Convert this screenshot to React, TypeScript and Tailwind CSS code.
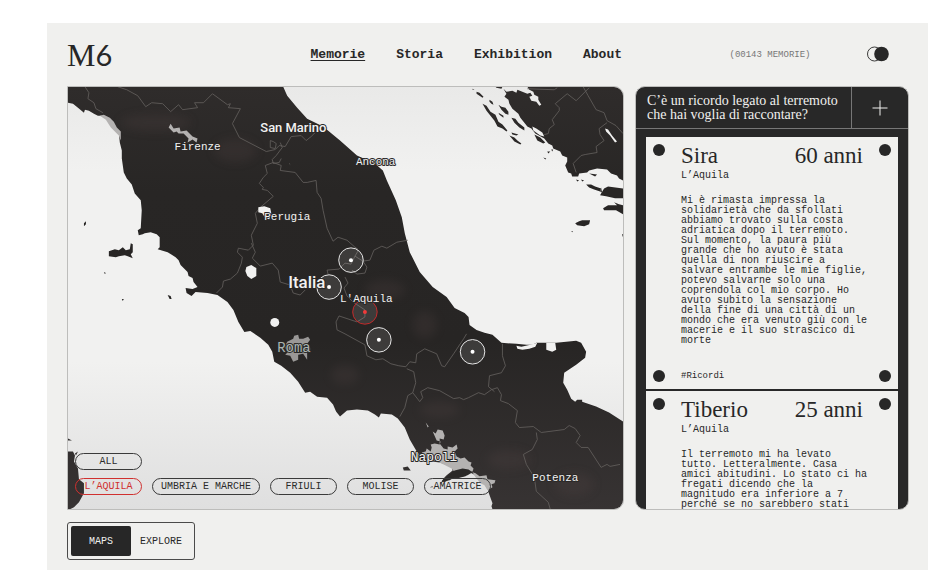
import { useState } from 'react';
import clsx from 'clsx';

interface IMemory {
  name: string;
  age: number;
  place: string;
  text: string;
  tag?: string;
}

const NAV_ITEMS = ['Memorie', 'Storia', 'Exhibition', 'About'];

const AREAS = ['L’AQUILA', 'UMBRIA E MARCHE', 'FRIULI', 'MOLISE', 'AMATRICE'];

const VIEWS = ['MAPS', 'EXPLORE'];

const MEMORIES: IMemory[] = [
  {
    name: 'Sira',
    age: 60,
    place: 'L’Aquila',
    text: 'Mi è rimasta impressa la solidarietà che da sfollati abbiamo trovato sulla costa adriatica dopo il terremoto. Sul momento, la paura più grande che ho avuto è stata quella di non riuscire a salvare entrambe le mie figlie, potevo salvarne solo una coprendola col mio corpo. Ho avuto subito la sensazione della fine di una città di un mondo che era venuto giù con le macerie e il suo strascico di morte',
    tag: '#Ricordi',
  },
  {
    name: 'Tiberio',
    age: 25,
    place: 'L’Aquila',
    text: 'Il terremoto mi ha levato tutto. Letteralmente. Casa amici abitudini. Lo stato ci ha fregati dicendo che la magnitudo era inferiore a 7 perché se no sarebbero stati',
  },
];

const PINS = [
  { x: 351, y: 260 },
  { x: 329, y: 287 },
  { x: 365, y: 312, active: true },
  { x: 379, y: 340 },
  { x: 473, y: 352 },
];

const BORDERS = [
  'M84 86l4 6-1 6 6 4 2 6 7 4',
  'M117 86l9 3 11 6 8 11 6-4 11 1 8 8 8-7 4 5 15-2-3-5 9 0 9-9 15 11 3-1-2 4 12 1-8 15 7 14 27 14 9-2 4-4 6 1 6-10 10-1 5 5 5-4 4-4',
  'M270 140l3 1 3 2-1 5-5-1zM280 142l2 5-6 8-4 4 1 4 6-1 2-4M289 163l1 1',
  'M273 162l-8 3 2 8-4 4-4 6 4 4-1 2 5 1 6 6-13 11-5 6 2 10-6 12 2 10-5 5-10-2-1 4 5 5-1 6-4 10-7 6-7 2-1 6-6 6',
  'M251 243l4 9-3 6 8 8 12-3 6 7 2 12 10 3 3 8 7 2 5-5',
  'M273 162l8 3-1 5 15 2 8 10 4 0 9-2 1 12 4 6 2 12 4 18 6 13 5-4 9 3 8 7 3 2',
  'M355 247l3 4-3 5-4 8-6-1-6 6-12 1 1 4M363 261l7-1 4-10 8-4 5 2 10-6 11-2M355 256l8 5 4 6-2 6-8 1-5-4',
  'M345 277l3 6-4 5 3 8 6 6 12 8 0 7-8 5-18-6-3 6 1 8 8 4 20 11 2 11 9 4 7-1 8 5 8 2 7 1 4-5 6 1 1-9 8-5 12 5 5 12 3 1 9-13 10-15 3-5',
  'M407 369l7 3 2 11-3 10 7 9 3-4-2-6 7-4 12 3 14 8 6-1 4 2 5-2 10-5 6 2 7-5 6-2 4 7-1 6 8 3 9 7-2 12 4 5 14-1 8 6 23-3 5-4 6 3 5 7-4 7 5 5 7 0 13 20 6-3 3 2 10-2',
  'M413 393l-5 3-3 12-5 9',
  'M503 344l0 12 3 10-4 7-12 3-1 11 6 5',
  'M537 433l1 7-5 10-9 5 3 10 8 13 2 14 12 11 2 7',
  'M545 134l4-1 1-5 5-4-2-5 7-9 0-3-4-4 12-10 9 7 13-13M584 86l5 9 8 14 8 3 3 8 9 5 7 8M608 122l-8 6 1 6 4 6-8 6 1 6-12 2-4 1-8 8 3 9',
  'M528 88l27 1 3-2',
];

const ISLANDS = [
  'M108 251l6-2 4 1 4-3 3 3 4-1 1-6 2 1 0 8-2 2 2 4-5-2-3-1-6 1-3 1-7-1z',
  'M83 223l2-2 0 3-2 2zM103 272l2 1-1 1zM121 299l2 0-1 2zM167 295l3 1 1 3-2 0z',
  'M67 439l4 2-4 0zM67 452l5 0 2 4-1 6 4 7 1 11 5 4 0 10-5 9-5 5-4 2-2 0zM74 454l3-2-2 4z',
  'M403 468l5-1 3 4-7 0z',
  'M473 88l2 1-2 0zM477 91l3 1 4 4-1 1-6-4zM483 103l4 2 4 6 5 3 3 7 4 3 5 6-1 1-4-3-5-2-3-6-4-5-4-5zM490 99l3 2 1 3-2-1-2-2zM499 104l3 2 4 1 3 4 0 3-3-1-4-4zM499 112l5 3 0 2-4-3zM512 117l4 1 3 4 6 5 0 3-5-3-5-5zM512 132l7 2-2 1-4-1zM510 135l5 2 3 3 4 3-1 1-6-3zM535 134l6 3 5 5-2 1-6-3z',
  'M496 86l7 0-1 2-5-1zM548 151l3 0-2 2zM544 157l3 1-1 1zM559 146l4 2 1 3-3-2zM552 149l2 0-1 2z',
  'M587 184l5 0 4 2 6 2-1 3-6-2-5-2zM602 193l3-5 4-2 15 2 0 10-8 0-9-2-6-1zM604 208l5-3 5 0 4 0-3-3 5 2 4 1 0 9-7-4-5 0-7 0zM576 223l4-2 3-1 8 0-1 4-5 2-7-1zM572 231l2 0-1 1zM623 234l1 0 0 3z',
  'M577 179l3 1-2 1zM582 179l3 1-2 1zM590 173l8 1-2 2zM602 187l1 5-2-1z',
];

const CITIES = [
  'M99 115l4-1 6 3 4 4 3 6 4 4 0 9-2-5-8-8-5-8z',
  'M168 127l2-4 3 5 6-1 1 4 6-1 6 6 5 2-1 4-4-3-5 3 1-4-5-5-5 0-2-2-3 1z',
  'M426 423l3 4-1 1zM433 432l3 2 2-4 5 1 2 5-1 4-4-1 0 5 4 5 4 1 0-3 5 1 4-3 1 4-3 3 2 5 4 2 4-1 4 4 3 1-1 3 3 3-1 3-4 1-5-1-7 3-5-6-10-5-10-4-9-2 2-2-3-3 4-1 1-3 4 3 1-4-1-3 4-1 5 1 1-3-4-1z',
  'M473 473l3 1 4 3 7-1 1 4 8 1-1 3-3 1 1 3-5 3-3-5-4-2-5-6z',
];

const LABELS = [
  { text: 'Firenze', x: 174, y: 149 },
  { text: 'Ancona', x: 356, y: 165 },
  { text: 'Perugia', x: 264, y: 220 },
  { text: 'L\'Aquila', x: 340, y: 302 },
  { text: 'Potenza', x: 533, y: 482 },
];

const MapDrawing = () => (
  <svg
    viewBox="67 86 557 424"
    preserveAspectRatio="xMidYMid slice"
    className="absolute inset-0 size-full"
    role="img"
    aria-label="Italia"
  >
    <defs>
      <linearGradient id="sea" x1="0" y1="0" x2="0" y2="1">
        <stop offset="0" stopColor="#e9e9e8" />
        <stop offset="0.2" stopColor="#f1f1f0" />
        <stop offset="0.65" stopColor="#f1f1f0" />
        <stop offset="1" stopColor="#dfdfdf" />
      </linearGradient>
      <linearGradient id="land" x1="0" y1="86" x2="0" y2="510" gradientUnits="userSpaceOnUse">
        <stop offset="0" stopColor="#2f2c2b" />
        <stop offset="0.25" stopColor="#282625" />
        <stop offset="0.6" stopColor="#272524" />
        <stop offset="1" stopColor="#373333" />
      </linearGradient>
      <filter id="soft" x="-50%" y="-50%" width="200%" height="200%">
        <feGaussianBlur stdDeviation="5" />
      </filter>
    </defs>
    <rect x="67" y="86" width="557" height="424" fill="url(#sea)" />
    <g fill="url(#land)">
      <path d="M67 86V102L72 103 77 107 83 112 84 109 88 110 93 113 97 115 103 115 112 123 118 132 119 142 121 150 121 158 123 172 126 178 131 184 134 193 140 200 141 210 140 228 137 230 138 235 142 234 144 233 150 232 156 234 159 237 159 247 157 249 167 252 175 257 178 260 180 265 187 272 188 276 192 278 193 282 197 287 192 289 185 288 186 293 191 296 195 292 207 293 217 295 227 302 233 310 238 322 244 332 250 331 260 338 268 345 272 352 274 362 281 366 290 373 298 382 305 393 310 392 317 397 327 398 333 405 336 412 340 417 347 411 357 410 368 411 375 415 379 418 381 414 392 415 398 419 405 428 410 440 417 452 425 461 440 463 452 467 453 471 447 476 445 478 442 482 445 483 450 480 458 479 466 477 470 473 474 475 480 480 486 485 489 489 489 493 493 504 492 507 493 510H624V422L610 413 597 407 583 402 583 400 578 400 576 402 572 399 568 390 564 383 565 373 577 365 586 358 587 352 582 343 577 341 557 343 540 343 537 343 533 345 527 345 517 344 502 343 493 335 485 333 477 330 470 325 469 317 465 313 455 308 447 297 433 287 420 272 410 252 405 233 402 217 396 200 387 180 383 170 375 163 357 155 340 140 323 126 307 118 297 107 287 95 283 86Z" />
      <path d="M528 86L530 89 534 91 535 94 539 96 539 99 542 104 540 105 537 101 532 100 530 96 533 95 531 92 528 93 523 91 518 89 517 92 513 90 507 91 504 88 507 93 505 96 509 99 510 103 513 108 519 113 521 117 528 126 532 128 536 133 545 138 549 143 553 145 554 148 561 151 563 155 568 157 568 161 566 165 569 172 572 173 573 176 579 176 580 173 588 172 590 170 598 168 608 169 612 173 618 175 620 178 624 180V86Z" />
      {ISLANDS.map((d) => (
        <path key={d} d={d} />
      ))}
    </g>
    <g fill="#5a4a48" opacity="0.2" filter="url(#soft)">
      <ellipse cx="155" cy="122" rx="36" ry="9" />
      <ellipse cx="235" cy="150" rx="22" ry="12" />
      <ellipse cx="385" cy="290" rx="20" ry="10" />
      <ellipse cx="425" cy="325" rx="12" ry="14" />
      <ellipse cx="345" cy="375" rx="14" ry="10" />
      <ellipse cx="440" cy="410" rx="20" ry="8" />
      <ellipse cx="510" cy="460" rx="22" ry="10" />
      <ellipse cx="575" cy="485" rx="20" ry="12" />
    </g>
    <g fill="none" stroke="#666260" strokeWidth="0.8" strokeLinejoin="round">
      {BORDERS.map((d) => (
        <path key={d} d={d} />
      ))}
    </g>
    {/* lakes and lagoons */}
    <g fill="#f1f1f0">
      <path d="M246 267l5-2 5 3 0 8-5 3-4-3-2-5z" />
      <circle cx="274.5" cy="322.5" r="4.5" />
      <path d="M258 207l6-1 6 2 1 5-2 6-4-1-3-5-4-1z" />
      <path d="M517 346l5 1 9-2 7-2-2 4-6 2-7 1-5-1zM547 343l9 0 1 7-4 2-6-2z" />
      <path d="M606 128l3 1 4 6 5 6-2 1-5-7-4-4zM533 126l4 2 6 4 2 4-4-1-7-5z" />
    </g>
    <path
      d="M287 342l6-3 1-3 4-1 1 4 4 0 5-2 2 3-3 4 3 4 0 5-3-1 0 8-4-6-5 1 0 5-5 2-3-6-5-1 4-4-5-3z"
      fill="#9a9897"
    />
    <g fill="#b4b2b1">
      {CITIES.map((d) => (
        <path key={d} d={d} />
      ))}
    </g>
    <path d="M440 485l4-5 5-4 6-5 8-2 6 1 4 3-5 3-8 2-5 0-5 3-6 1z M430 488l3-1 0 1z" fill="#2b2928" />
    {PINS.map(({ x, y, active }) => (
      <g key={`${x}-${y}`}>
        <circle
          cx={x}
          cy={y}
          r="12.3"
          fill="#ffffff"
          fillOpacity="0.1"
          stroke={active ? '#c42a2a' : '#e6e6e6'}
        />
        <circle cx={x} cy={y} r="2" fill={active ? '#f03a3a' : '#ffffff'} />
      </g>
    ))}
    <g fill="#f2f2f2" stroke="#2a2827" strokeWidth="2" paintOrder="stroke" strokeLinejoin="round">
      <text x="260" y="131" className="font-['Roboto',sans-serif] text-[13px] font-medium">
        San Marino
      </text>
      <text x="288" y="288" className="font-['Roboto',sans-serif] text-[17px] font-medium">
        Italia
      </text>
      <text x="277" y="352" fill="#a9b3b0" className="font-['Liberation_Mono',monospace] text-[14px]">
        Roma
      </text>
      <text x="411" y="462" className="font-['Liberation_Mono',monospace] text-[13px]">
        Napoli
      </text>
      {LABELS.map(({ text, x, y }) => (
        <text key={text} x={x} y={y} className="font-['Liberation_Mono',monospace] text-[11px]">
          {text}
        </text>
      ))}
    </g>
  </svg>
);

interface IAreaChipProps {
  label: string;
  selected: boolean;
  onClick: () => void;
}

const AreaChip = ({ label, selected, onClick }: IAreaChipProps) => (
  <button
    type="button"
    onClick={onClick}
    className={clsx(
      'h-[17px] min-w-[67px] rounded-full border px-2 text-[10px] leading-[15px]',
      selected ? 'border-[#d0302f] text-[#d0302f]' : 'border-[#3a3a3a] text-[#2b2b2b]',
    )}
  >
    {label}
  </button>
);

const Dots = ({ single }: { single: boolean }) => (
  <div className="flex flex-col justify-between">
    <span className="size-3 rounded-full bg-[#272727]" />
    {!single && <span className="size-3 rounded-full bg-[#272727]" />}
  </div>
);

const MemoryCard = ({ name, age, place, text, tag }: IMemory) => (
  <article className="flex gap-4 bg-[#f0f0ee] px-[7px] py-[7px] text-[#272727]">
    <Dots single={!tag} />
    <div className="min-w-0 flex-1">
      <h2 className="flex justify-between font-['Liberation_Serif',serif] text-[23px] leading-6">
        <span>{name}</span>
        <span>{age} anni</span>
      </h2>
      <p className="mt-[2px] text-[10px] leading-3">{place}</p>
      <p className="mt-[14px] -mr-2 text-[10px] leading-[10px]">{text}</p>
      {tag && <p className="mt-6 text-[9px] leading-3">{tag}</p>}
    </div>
    <Dots single={!tag} />
  </article>
);

export default function App() {
  const [area, setArea] = useState('L’AQUILA');
  const [view, setView] = useState('MAPS');
  const [dark, setDark] = useState(false);

  return (
    <div className="flex h-screen flex-col bg-white pt-[23px] pr-[22px] pl-[47px] font-['Liberation_Mono',monospace]">
      <div className="flex min-h-0 flex-1 flex-col bg-[#f0f0ee] pr-[19px] pl-5 text-[#272727]">
        <header className="flex h-[63px] shrink-0 items-center gap-[11px]">
          <div className="flex flex-1 items-center justify-between pr-[2px]">
            <a href="#home" className="font-['Liberation_Serif',serif] text-[32px] leading-none">
              M<span className="font-['Lato',sans-serif] text-[29px]">6</span>
            </a>
            <nav className="flex gap-[31px] text-[13px] font-bold">
              {NAV_ITEMS.map((item) => (
                <a
                  key={item}
                  href={`#${item.toLowerCase()}`}
                  className={clsx(item === 'Memorie' && 'underline underline-offset-2')}
                >
                  {item}
                </a>
              ))}
            </nav>
          </div>
          <div className="grid w-[274px] grid-cols-[1fr_auto_1fr] items-center pr-5">
            <span className="col-start-2 pt-[2px] pl-4 text-[9px] text-[#777777]">(00143 MEMORIE)</span>
            <button
              type="button"
              role="switch"
              aria-checked={dark}
              aria-label="Tema scuro"
              onClick={() => setDark(!dark)}
              className="justify-self-end pb-[2px]"
            >
              <svg width="22" height="16" viewBox="0 0 22 16" className="block">
                <circle cx="7.5" cy="8" r="7" fill="none" stroke="#272727" strokeWidth="0.9" />
                <circle cx="14.5" cy="8" r="7.3" fill="#272727" />
              </svg>
            </button>
          </div>
        </header>

        <main className="flex min-h-0 flex-1 gap-[11px]">
          <section className="relative flex min-w-0 flex-1 flex-col justify-end overflow-hidden rounded-r-[10px] border border-[#bdbdbb]">
            <MapDrawing />
            <div className="relative flex flex-col items-start gap-2 px-[7px] pb-[14px]">
              <AreaChip label="ALL" selected={area === 'ALL'} onClick={() => setArea('ALL')} />
              <div className="flex flex-wrap gap-[10px]">
                {AREAS.map((item) => (
                  <AreaChip key={item} label={item} selected={area === item} onClick={() => setArea(item)} />
                ))}
              </div>
            </div>
          </section>

          <aside className="flex w-[274px] shrink-0 flex-col overflow-hidden rounded-[10px] border border-[#bdbdbb] bg-[#282828]">
            <div className="flex h-[42px] shrink-0 border-b border-[#777777] text-[#f0f0ee]">
              <p className="flex-1 pt-[7px] pl-[11px] font-['Liberation_Serif',serif] text-[14px] leading-[14px]">
                C’è un ricordo legato al terremoto
                <br />
                che hai voglia di raccontare?
              </p>
              <button
                type="button"
                aria-label="Aggiungi un ricordo"
                className="flex w-[57px] items-center justify-center border-l border-[#777777]"
              >
                <svg width="16" height="16" viewBox="0 0 16 16" stroke="currentColor" fill="none">
                  <path d="M8 0.5V15.5M0.5 8H15.5" />
                </svg>
              </button>
            </div>
            <div className="mx-[10px] mt-2 flex min-h-0 flex-1 flex-col gap-[2px] overflow-y-auto [scrollbar-width:none]">
              {MEMORIES.map((memory) => (
                <MemoryCard key={memory.name} {...memory} />
              ))}
            </div>
          </aside>
        </main>

        <footer className="shrink-0 pt-3 pb-[10px]">
          <div className="inline-flex h-[38px] rounded-[3px] border border-[#4a4a4a] p-[3px] align-top text-[10px]">
            {VIEWS.map((item) => (
              <button
                key={item}
                type="button"
                aria-pressed={view === item}
                onClick={() => setView(item)}
                className={clsx('w-[60px] rounded-[2px]', view === item && 'bg-[#272727] text-[#f0f0ee]')}
              >
                {item}
              </button>
            ))}
          </div>
        </footer>
      </div>
    </div>
  );
}
